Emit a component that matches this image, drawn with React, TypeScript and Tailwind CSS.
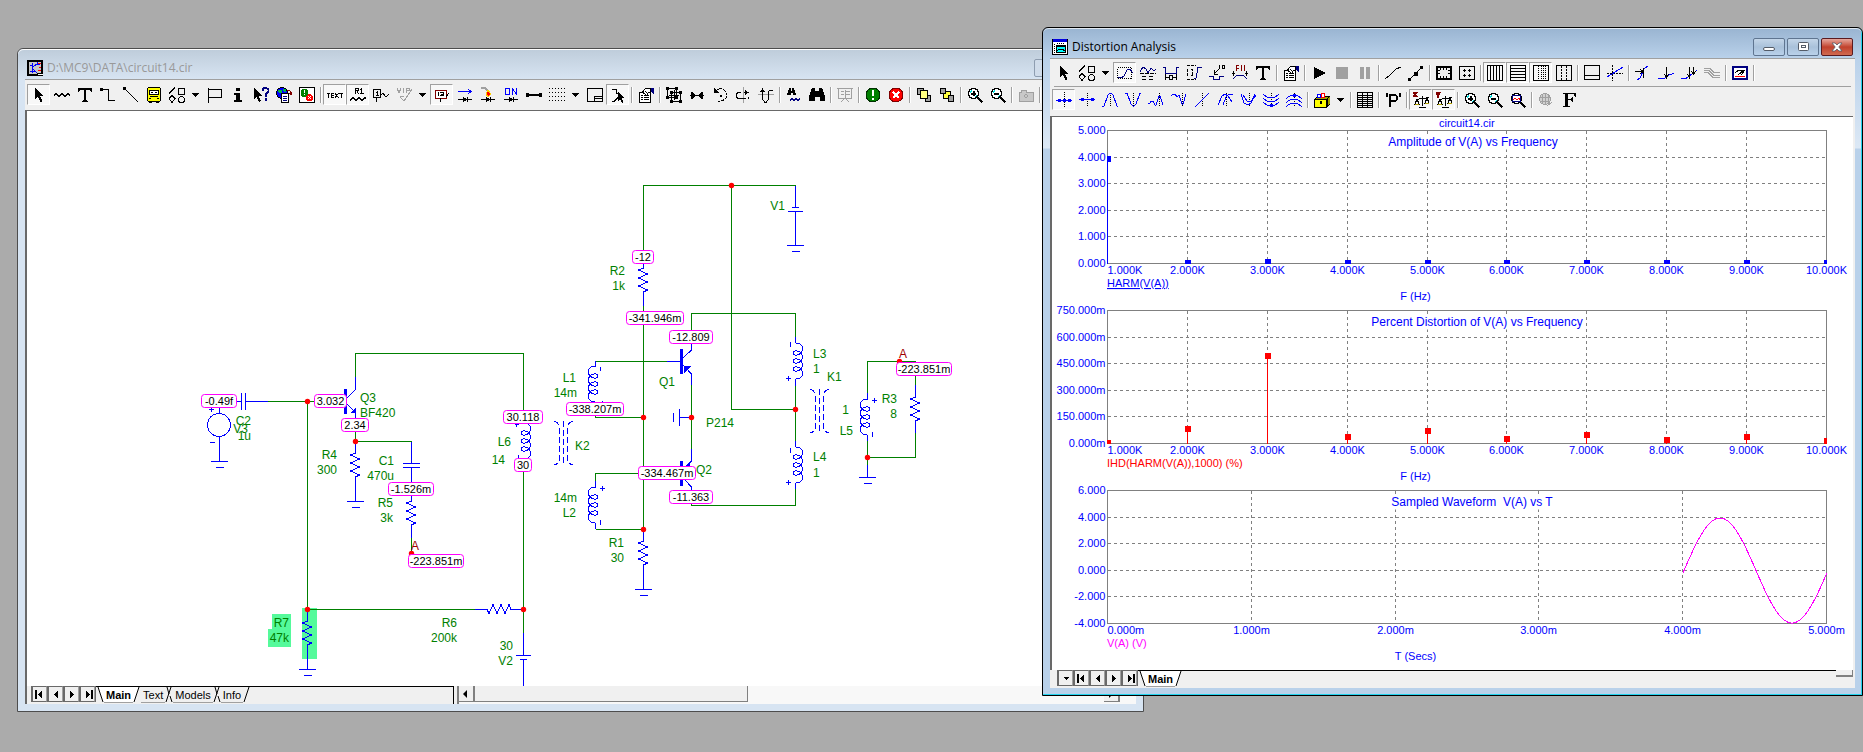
import type { ReactNode } from 'react';

const BLUE = '#0000ff';
const NAVY = '#000080';
const GREEN = '#008000';
const GRAY = '#808080';
const PINK = '#ff00ff';

/* ── Toolbar icons, all on a 16×16 grid ── */

const magnifier = (
  <>
    <circle cx="6.5" cy="6.5" r="5" stroke="#000" strokeWidth="1.5" fill="#fff" />
    <path d="M3 6l2-3M8 10l2-2" stroke="#00e0e0" />
    <path d="M10.5 10.5l5 5" strokeWidth="2.5" />
  </>
);

const properties = (
  <>
    <path d="M1.5 5.500h11v10h-11z" fill="#fff" />
    <path d="M3 8.500h2M6 8.500h5M3 10.500h2M6 10.500h5M3 12.500h2M6 12.500h5" />
    <path d="M4.500 5l3-3.500h5v4l-2 0-2 3-4-3.500z" fill="#fff" />
    <path d="M7 4l2 2" />
    <path d="M13 1h3v6h-1l-2-2z" fill={NAVY} stroke="none" />
  </>
);

const pointer = <path d="M4 1v11l3-2.500 2.500 5.500 2-1-2.500-5H13z" fill="#000" stroke="none" />;

const shapes = (
  <>
    <path d="M0 6.500L6 .500M9.500 1.500h6v6h-6zM0 11.500l3-3 3 3-3 4z" />
    <circle cx="12.500" cy="12.500" r="3" />
  </>
);

const boldT = (
  <path d="M1 1h14v4h-1l-1-2H9v10l2 1v1H5v-1l2-1V3H3L2 5H1z" fill="#000" stroke="none" />
);

const balance = (
  <>
    <path d="M9.500 4v10M6 15h7M3 7.500l13-2" />
    <path d="M4 7l-2 5h4zM14 6l-2 5h4z" stroke="#000" />
    <path d="M2 12h4M12 11h4" stroke="#b0a000" />
  </>
);

const diode = <path d="M1 12.500h14M10.500 10v5M6 10v5l3-2.500z" />;

const ICONS: Record<string, ReactNode> = {
  pointer,
  shapes,
  properties,
  text: boldT,
  wave: <path d="M0 8.500l2-2 3 3 3-3 3 3 3-3 2 2" />,
  wire: (
    <>
      <path d="M2 2.500h6.500v11H15" />
      <path d="M0 1h3v3H0z" fill="#000" stroke="none" />
    </>
  ),
  diagonal: (
    <>
      <path d="M1 1l14 14" />
      <path d="M0 0h3v3H0z" fill="#000" stroke="none" />
    </>
  ),
  bus: (
    <>
      <rect x="1.500" y=".5" width="13" height="14" rx="2" fill="#ffff00" />
      <rect x="3.500" y="3.500" width="9" height="4" fill="#fff" />
      <path d="M5 5.500h2M9 5.500h2M4 9.500h8M3 11.500h2M11 11.500h2M3 15h3M10 15h3" />
    </>
  ),
  flag: <path d="M1.500 1v15M1.500 2.500h13v8h-13" />,
  info: <path d="M6 1h4v3H6zM4 6h6v7h2v2H4v-2h2V8H4z" fill="#000" stroke="none" />,
  help: (
    <>
      <path d="M1 1v11l2.500-2L6 15l2-1-2.500-5H9z" fill="#000" stroke="none" />
      <path d="M9.500 4V2.500l2-1.500h2l2 1.500v2l-3 3v2M12.500 11v3" stroke={NAVY} strokeWidth="2" />
    </>
  ),
  web: (
    <>
      <circle cx="6" cy="6" r="5.500" fill="#0000ff" />
      <path d="M2 3h4v3H3zM7 2h3v3H8z" fill="#00b050" stroke="none" />
      <path d="M5.500 6.500h7v9h-7z" fill="#fff" />
      <path d="M7 9.500h4M7 11.500h4M7 13.500h4" stroke={NAVY} />
      <path d="M11 3q4 0 4 4M13 6l2 2 1-3" stroke="#800000" />
    </>
  ),
  errors: (
    <>
      <rect x=".5" y=".5" width="15" height="15" fill="#fff" />
      <circle cx="5.500" cy="6" r="4" fill="#008000" stroke="none" />
      <path d="M5.500 3v3M5.500 7v1" stroke="#fff" />
      <circle cx="10.500" cy="10.500" r="3.500" fill="#ff0000" stroke="none" />
      <path d="M9 9l3 3M12 9l-3 3" stroke="#fff" />
    </>
  ),
  gridText: (
    <path d="M0 6.500h3M1.500 6v5M7 6.500H4.500v4H7M5 8.500h2M8.500 6v1l2.500 3v1M11 6v1L8.500 10v1M12 6.500h4M14.500 6v5" />
  ),
  attributes: (
    <>
      <path d="M5.500 7V1.500h2.500v2H5.500M7 4l1.500 3M11.500 1v6M10 2.500h1M10 6.500h4" />
      <path d="M0 13.500l3-3 3 3 3-3 3 3 3-3 1 1" />
    </>
  ),
  nodeNumbers: <path d="M.5 2.500h7v8h-7zM4.500 4v5M3 5.500h1M3 8.500h3M3.500 11v4M8 8l2-2 3 4 3-3" />,
  vip: <path d="M1 1l2 5 2-5M7.500 1v5M10.500 6V1.500H13v2h-2M16 2l-8 12-4-4M4 9.500h4" stroke="#a0a0a0" />,
  voltages: (
    <>
      <path d="M1 3h11v8H1z" stroke="#800000" fill="#fff" />
      <path d="M4.500 5v4M6 5.500h3v3H6M7 7.500h2M6.500 11v4M12 10l3-4" />
    </>
  ),
  currents: (
    <>
      <path d="M1 4.500h13M11 2l3 2.500L11 7" stroke={BLUE} />
      {diode}
    </>
  ),
  power: (
    <>
      <path d="M1 1h4l3 3" stroke="#a0a0a0" strokeWidth="2" />
      <path d="M8 3l3 4-3 3-2-3z" fill="#ff0000" stroke="#ffd000" />
      {diode}
    </>
  ),
  conditions: (
    <>
      <path d="M2.500 1.500h4v6h-4zM9.500 8V1.500l4 6V1" stroke={BLUE} />
      {diode}
    </>
  ),
  pins: (
    <>
      <path d="M1 8h14" strokeWidth="1.500" />
      <path d="M0 6h3v4H0zM13 6h3v4h-3z" fill="#000" stroke="none" />
    </>
  ),
  grid: <path d="M0 1.500h17M0 5.500h17M0 9.500h17M0 13.500h17" strokeDasharray="1 2" />,
  corner: <path d="M.5 1.500h15v13H.5zM7.500 14.500v-5h8M8 11.500h7" />,
  rubberband: (
    <>
      <path d="M2 2.500h4v4h3M2 14.500h2l4-4" />
      <path d="M8 5v9l2-2 2 4 1.500-1-2-4h3z" fill="#000" stroke="none" />
    </>
  ),
  group: (
    <>
      <path d="M1.500 1.500h9v9h-9zM5.500 5.500h9v9h-9zM3 8.500h10M8.500 3v10" />
      <path
        d="M0 0h3v3H0zM9 0h3v3H9zM0 9h3v3H0zM9 9h3v3H9zM4 4h3v3H4zM13 4h3v3h-3zM4 13h3v3H4zM13 13h3v3h-3z"
        fill="#000"
        stroke="none"
      />
    </>
  ),
  mirror: (
    <>
      <path d="M2.500 5v7M13.500 5v7M1 8.500h14" />
      <path d="M3 5v7l4-3.500zM13 5v7L9 8.500z" fill="#000" stroke="none" />
    </>
  ),
  rotate: (
    <>
      <path d="M4 4q4-4 8-1 4 4 2 8-4 4-8 3" strokeDasharray="3 1" />
      <path d="M2 1v5h5zM8 8h2v2H8z" fill="#000" stroke="none" />
    </>
  ),
  flipX: (
    <>
      <path d="M8.500 0v16" stroke="#a0a0a0" />
      <path d="M6 5.500H3L1.500 7v3L3 11.500h8M9 5.500h4M13 12l1-2" />
      <path d="M10 3v5l4-2.500z" fill="#000" stroke="none" />
    </>
  ),
  flipY: (
    <>
      <path d="M0 7.500h16" stroke="#a0a0a0" />
      <path d="M4.500 4v8l2 3h2l2-3V5l1-2h3" />
      <path d="M2 5h5L4.500 1z" fill="#000" stroke="none" />
    </>
  ),
  findNext: (
    <>
      <path d="M3 1h2v3h1V1h2l2 7H7V6H5v2H1z" fill="#000" stroke="none" />
      <path d="M4 13.500l2-2 2 2 2-2 2 2 2-2" stroke={NAVY} />
    </>
  ),
  find: <path d="M3 1h3v3h4V1h3l3 8v5h-5v-4H6v4H0V9z" fill="#000" stroke="none" />,
  board: (
    <path
      d="M0 1.500h16M1.500 2v9h13V2M4 4.500h3M9 4.500h4M4 7.500h3M9 7.500h4M8 3v8M4 15l4-4 4 4"
      stroke="#a0a0a0"
    />
  ),
  go: (
    <>
      <circle cx="8" cy="8" r="7" fill="#008000" stroke="#003000" />
      <path d="M8 3v6M8 11v2" stroke="#fff" strokeWidth="2" />
    </>
  ),
  cancel: (
    <>
      <circle cx="8" cy="8" r="7" fill="#ff0000" stroke="#800000" />
      <path d="M5 5l6 6M11 5l-6 6" stroke="#fff" strokeWidth="2" />
    </>
  ),
  bringFront: (
    <>
      <path d="M1.500 1.500h6v6h-6zM9.500 8.500h5v6h-5z" fill="#a0a0a0" />
      <path d="M4.500 3.500h7v8h-7z" fill="#ffff80" />
    </>
  ),
  sendBack: (
    <>
      <path d="M4.500 4.500h7v7h-7z" fill="#ffff40" />
      <path d="M1.500 1.500h5v5h-5zM9.500 8.500h5v6h-5z" fill="#a0a0a0" />
    </>
  ),
  zoomIn: (
    <>
      {magnifier}
      <path d="M4 6.500h5M6.500 4v5" strokeWidth="2" />
    </>
  ),
  zoomOut: (
    <>
      {magnifier}
      <path d="M4 6.500h5" strokeWidth="2" />
    </>
  ),
  zoomFit: (
    <>
      {magnifier}
      <rect x="2.500" y="3.500" width="8" height="6" fill="#fff" stroke={NAVY} />
      <path d="M3 8l2-2 2 2 2-2 1 2" stroke="#ff0000" />
    </>
  ),
  camera: (
    <>
      <path d="M1 5h2V3h5v2h7v9H1z" fill="#c8c8c8" stroke="#a0a0a0" />
      <path d="M6 9l2-2 2 2-2 2z" stroke="#a0a0a0" />
    </>
  ),
  scaleMode: (
    <>
      <path d="M.5 2.500h14v11H.5z" strokeDasharray="1 1" />
      <path d="M1 12l3 1 3-2 3-6 3-1 3 4" stroke={NAVY} />
    </>
  ),
  cursorMode: (
    <>
      <path d="M0 7l3-5 3 2 2 4 3-5 3 3 2-2" stroke={NAVY} />
      <path d="M0 8.500h16M2 11.500h5M9 11.500h5M2 14.500h5M9 14.500h5" strokeDasharray="4 1" />
    </>
  ),
  horizTag: (
    <>
      <path d="M0 2.500h2.500v6h11v-6H16" stroke={NAVY} />
      <path d="M2.500 9v6M13.500 9v6M3 12.500h3M10 12.500h3M6.500 10.500h3v4h-3z" />
    </>
  ),
  vertTag: (
    <>
      <path d="M8 13.500h2l2-11h4" stroke={NAVY} />
      <path d="M1.500 4v7M4.500 4.500h2v6h-2M1 .500h9M1 14.500h9" strokeDasharray="3 1" />
    </>
  ),
  pointTag: (
    <>
      <path d="M0 11.500h4v3h6v-3h5" stroke={NAVY} />
      <path d="M5 9l5-5M5.500 5v4H9M10.500 0v4M13.500 .500h2v3h-2z" />
    </>
  ),
  formula: (
    <>
      <path d="M4.500 6V.500H7M5 3.500h2M10 0L9 3l1 3M12 0l1 3-1 3" stroke="#800000" />
      <path d="M1 14l4-4h6l4 4" stroke={NAVY} />
      <path d="M0 8.500h3M13 8.500h3M1.500 6v5M14.500 6v5" />
    </>
  ),
  play: <path d="M3 2v12l12-6z" fill="#000" stroke="none" />,
  stop: <path d="M2 2h12v12H2z" fill="#a0a0a0" stroke="none" />,
  pause: <path d="M3 2h4v12H3zM9 2h4v12H9z" fill="#a0a0a0" stroke="none" />,
  line: <path d="M0 14l4-3 7-7 5-2" />,
  dataPoints: (
    <>
      <path d="M1.500 14.500l12-12" />
      <path d="M0 13h3v3H0zM6 7h4v4H6zM12 1h3v3h-3z" fill="#000" stroke="none" />
    </>
  ),
  ruler: (
    <>
      <rect x="1" y="2" width="14" height="12" strokeWidth="2" />
      <path d="M4.500 3v2M7.500 3v2M10.500 3v2M4.500 11v2M7.500 11v2M10.500 11v2M2 5.500h2M2 8.500h2M12 5.500h2M12 8.500h2" />
    </>
  ),
  plusMarks: (
    <>
      <path d="M.5 1.500h15v13H.5z" />
      <path d="M4 5.500h3M9 5.500h3M4 10.500h3M9 10.500h3M5.500 4v3M10.500 4v3M5.500 9v3M10.500 9v3" />
    </>
  ),
  vertGrid: <path d="M.5 .500h15v15H.5zM3.500 1v14M6.500 1v14M9.500 1v14M12.500 1v14" />,
  horizGrid: <path d="M.5 .500h15v15H.5zM1 3.500h14M1 6.500h14M1 9.500h14M1 12.500h14" />,
  minorGrid: (
    <>
      <path d="M.5 .500h15v15H.5z" />
      <path d="M5.500 1v14M8.500 1v14M10.500 1v14M12.500 1v14" strokeDasharray="1 1" />
    </>
  ),
  minorLines: (
    <>
      <path d="M.5 .500h15v15H.5z" />
      <path d="M5.500 1v14M10.500 1v14" strokeDasharray="2 1" />
    </>
  ),
  baseline: <path d="M.5 .500h15v14H.5zM1 10.500h14" />,
  tracker: (
    <>
      <path d="M0 8.500h16M5.500 0v16" strokeDasharray="2 1" />
      <path d="M0 12L16 2" stroke={BLUE} />
    </>
  ),
  cursorX: (
    <>
      <path d="M2 15l3-2 4-9 4-3" stroke={BLUE} />
      <path d="M0 6.500h7M5 4l3 2.500L5 9M8.500 3v10" />
    </>
  ),
  cursorY: (
    <>
      <path d="M0 13.500h6l6-4 4-1" stroke={BLUE} />
      <path d="M8.500 2v12M6 9l2.500 3L11 9" />
    </>
  ),
  cursorPair: (
    <>
      <path d="M0 13.500h5l8-6 3-2" stroke={BLUE} />
      <path d="M8.500 2v12M12.500 2v8M6 9l2.500 3M10 6l2.500 3L15 6" />
    </>
  ),
  family: <path d="M0 3.500h6l4 4h6M0 5.500h5l5 5h6M0 7.500h4l5 5h7" stroke="#a0a0a0" />,
  thumb: (
    <>
      <path d="M1 2h14v12H1z" stroke={NAVY} fill="#fff" strokeWidth="2" />
      <path d="M3 12l3-1 3 1 4-1" stroke="#ff0000" />
      <path d="M3 8l4-3h5L6 10M9 10l4-5" />
    </>
  ),
  peakAll: (
    <>
      <path d="M8.500 0v16" strokeDasharray="1 1" />
      <path d="M0 8.500h16" stroke={BLUE} />
      <path d="M2 7h3v3H2zM7 7h3v3H7zM12 7h3v3h-3z" fill={BLUE} stroke="none" />
    </>
  ),
  peakNext: (
    <>
      <path d="M8.500 1v14" strokeDasharray="1 1" />
      <path d="M0 7.500h16" stroke={BLUE} />
      <path d="M2 6h3v3H2zM12 6h3v3h-3z" fill={BLUE} stroke="none" />
    </>
  ),
  peak: (
    <>
      <path d="M8.500 1v14" strokeDasharray="1 1" />
      <path d="M0 14h2L6 3l2-2h1l2 2 4 11h1" stroke={BLUE} />
    </>
  ),
  valley: (
    <>
      <path d="M8.500 1v14" strokeDasharray="1 1" />
      <path d="M0 1h2l4 11 2 2h1l2-2 4-11h1" stroke={BLUE} />
    </>
  ),
  high: (
    <>
      <path d="M11.500 1v14" strokeDasharray="1 1" />
      <path d="M0 11h2l1-2h2l2 4h1l3-9h1l3 9" stroke={BLUE} />
    </>
  ),
  low: (
    <>
      <path d="M11.500 1v14" strokeDasharray="1 1" />
      <path d="M0 4l2-2h2l2 3 2-2 3 9h1l3-10" stroke={BLUE} />
    </>
  ),
  inflection: (
    <>
      <path d="M8.500 1v14" strokeDasharray="1 1" />
      <path d="M1 15L15 1" stroke={BLUE} />
    </>
  ),
  globalHigh: (
    <>
      <path d="M9.500 1v14" strokeDasharray="1 1" />
      <path d="M1 13l4-9 3-2 3 2 4 6M6 13l3-8 3-3 4 1" stroke={BLUE} />
    </>
  ),
  globalLow: (
    <>
      <path d="M9.500 1v14" strokeDasharray="1 1" />
      <path d="M1 2l3 9 4 2 3-2 4-9M3 3l4 6 4 1 5-7" stroke={BLUE} />
    </>
  ),
  bottom: (
    <>
      <path d="M8.500 1v14" strokeDasharray="1 1" />
      <path d="M0 2q8 8 16 0M0 6q8 8 16 0M0 10q8 8 16 0" stroke={BLUE} />
      <path d="M7 12h3v3H7z" fill={BLUE} stroke="none" />
    </>
  ),
  top: (
    <>
      <path d="M8.500 1v14" strokeDasharray="1 1" />
      <path d="M0 7q8-8 16 0M0 11q8-8 16 0M0 15q8-8 16 0" stroke={BLUE} />
      <path d="M7 2h3v3H7z" fill={BLUE} stroke="none" />
    </>
  ),
  chest: (
    <>
      <path d="M1 7l3-3h12l-3 3zM13 7l3-3v8l-3 3z" fill="#a0a000" />
      <path d="M.5 7.500h12v8H.5z" fill="#ffff00" />
      <path d="M3 5V2h3v3z" fill="#fff" stroke={BLUE} />
      <path d="M7 1h3v4H7z" fill="#fff" stroke="#ff0000" />
      <path d="M6 9h2v3H6z" fill="#000" stroke="none" />
    </>
  ),
  table: (
    <path d="M.5 .500h15v15H.5zM1 3.500h14M1 5.500h14M1 7.500h14M1 9.500h14M1 11.500h14M1 13.500h14M5.500 1v14M10.500 1v14" />
  ),
  performance: (
    <path d="M1.500 1v4M15 1v4M5 15V3h5.500l1.500 1.500v3L10.500 9H5" strokeWidth="2" />
  ),
  xScale: (
    <>
      {balance}
      <path d="M0 0l4 5M4 0L0 5" stroke="#800000" strokeWidth="2" />
    </>
  ),
  yScale: (
    <>
      {balance}
      <path d="M0 0l2 3 2-3M2 3v3" stroke="#800000" strokeWidth="2" />
    </>
  ),
  globe: (
    <>
      <circle cx="7" cy="7" r="5.500" fill="#d0d0d0" stroke="#a0a0a0" />
      <path d="M2 5.500h10M2 9.500h10M7.500 2v11M4.500 3v9M10.500 3v9M9 14l5-4" stroke="#a0a0a0" />
    </>
  ),
  font: (
    <path d="M2 1h13v4h-1l-1-3H7v5h3l1-2h1v5h-1l-1-2H7v6l2 0v1H2v-1h2V2H2z" fill="#000" stroke="none" />
  ),
};

// '|' is a separator, 'v' a drop-down arrow, a leading '*' a pressed button
const CIRCUIT_TOOLS =
  '*pointer wave text wire diagonal bus shapes v flag info help web errors | *gridText *attributes nodeNumbers vip v *voltages currents power conditions pins grid v corner *rubberband | properties | group mirror rotate flipX flipY | findNext find | board | go cancel | bringFront sendBack | zoomIn zoomOut | camera |';
const SCOPE_TOOLS =
  'pointer shapes v *scaleMode cursorMode horizTag vertTag pointTag formula text | properties | play stop pause | line dataPoints | ruler plusMarks | *vertGrid *horizGrid *minorGrid minorLines | baseline tracker | cursorX cursorY cursorPair family | thumb |';
const CURSOR_TOOLS =
  '*peakAll peakNext peak valley high low inflection globalHigh globalLow bottom top | chest v | table | performance | *xScale *yScale | zoomIn zoomOut zoomFit | globe font';

function Toolbar({ tools, label }: { tools: string; label: string }) {
  return (
    <div role="toolbar" aria-label={label} className="flex h-[21px] shrink-0 items-center">
      {tools.split(' ').map((tool, i) => {
        if (tool === '|') {
          return (
            <div key={i} className="flex w-[5px] shrink-0 justify-center">
              <div className="h-4 w-[2px] border-r border-l border-r-white border-l-[#a0a0a0]" />
            </div>
          );
        }
        if (tool === 'v') {
          return (
            <button key={i} aria-label="More" className="flex w-[15px] shrink-0 justify-center">
              <svg width="7" height="4" shapeRendering="crispEdges">
                <path d="M0 0h7L3.500 4z" />
              </svg>
            </button>
          );
        }
        const pressed = tool.startsWith('*');
        const name = pressed ? tool.slice(1) : tool;
        return (
          <button
            key={i}
            aria-label={name}
            aria-pressed={pressed}
            className={`flex h-[21px] w-[23px] shrink-0 items-center justify-center border ${
              pressed
                ? 'border-t-[#a0a0a0] border-r-white border-b-white border-l-[#a0a0a0] bg-[#f8f8f8]'
                : 'border-transparent'
            }`}
          >
            <svg width="16" height="16" fill="none" stroke="#000" shapeRendering="crispEdges">
              {ICONS[name]}
            </svg>
          </button>
        );
      })}
    </div>
  );
}

/* ── Window chrome ── */

function CaptionButtons({ active }: { active: boolean }) {
  const plain = active
    ? 'border-[#5f7590] bg-linear-to-b from-[#c3d5e8] via-[#a9c1da] to-[#b9d1ea]'
    : 'border-[#8e9db0] bg-[#d0dcea]';
  const close = active ? 'border-[#5a1a20] bg-linear-to-b from-[#e5a79e] via-[#c1402c] to-[#cf6a50]' : plain;
  return (
    <div className="flex gap-[2px]">
      <button aria-label="Minimize" className={`flex h-[18px] w-8 items-center justify-center rounded-xs border ${plain}`}>
        <span className="mt-1 h-1 w-3 rounded-xs border border-[#545c68] bg-white" />
      </button>
      <button aria-label="Restore" className={`flex h-[18px] w-8 items-center justify-center rounded-xs border ${plain}`}>
        <svg width="11" height="9" fill="#fff" stroke="#545c68">
          <rect x=".5" y=".5" width="10" height="8" rx="1" />
          <rect x="3.500" y="3.500" width="4" height="2" />
        </svg>
      </button>
      <button aria-label="Close" className={`flex h-[18px] w-8 items-center justify-center rounded-xs border ${close}`}>
        <svg width="12" height="10" fill="#fff" stroke="#545c68" strokeWidth=".8">
          <path d="M1 1h3l2 2 2-2h3L7.800 5 11 9H8L6 7 4 9H1l3.200-4z" />
        </svg>
      </button>
    </div>
  );
}

const NAV = {
  list: 'M4 6h6L7 9z',
  first: 'M2 3h2v9H2zM9 3v9L5 7.500z',
  prev: 'M9 3v9L5 7.500z',
  next: 'M5 3v9l4-4.500z',
  last: 'M5 3v9l4-4.500zM10 3h2v9h-2z',
};

function NavButtons({ names }: { names: (keyof typeof NAV)[] }) {
  return (
    <div className="flex h-4 shrink-0 border-r border-[#696969]">
      {names.map((name) => (
        <button
          key={name}
          aria-label={name}
          className="h-4 w-4 border-t border-r border-b border-l-2 border-t-[#696969] border-r-[#a0a0a0] border-b-[#696969] border-l-[#696969] bg-[#f0f0f0]"
        >
          <svg width="13" height="14" shapeRendering="crispEdges">
            <path d={NAV[name]} />
          </svg>
        </button>
      ))}
    </div>
  );
}

// Slanted edge between two page tabs; white where it belongs to the open page
function TabEdge({ left, right }: { left?: 'open' | 'shut'; right?: 'open' | 'shut' }) {
  return (
    <svg width="8" height="16" className="shrink-0">
      {left === 'open' && <path d="M0 0h6L1 15H0z" fill="#fff" />}
      {right === 'open' && <path d="M2 0h6v15H7z" fill="#fff" />}
      {left && <path d="M6 0L1 15" stroke="#000" />}
      {right && <path d={left ? 'M2 0l2 7M5 9l2 6' : 'M2 0l5 15'} stroke="#000" />}
    </svg>
  );
}

function PageTab({ name, open }: { name: string; open?: boolean }) {
  return (
    <button
      role="tab"
      aria-selected={!!open}
      className={`h-4 border-b border-[#a0a0a0] px-[2px] text-[11px] leading-[14px] ${open ? 'bg-white font-bold' : ''}`}
    >
      {name}
    </button>
  );
}

/* ── Schematic parts, in desktop pixels ── */

function Resistor({ x, y, flat }: { x: number; y: number; flat?: boolean }) {
  const d = flat
    ? `M${x} ${y}l2 4 4-9 4 9 4-9 4 9 4-9 2 5`
    : `M${x} ${y}l-5 2 9 4-9 4 9 4-9 4 9 4-4 2`;
  return <path d={d} stroke={BLUE} fill="none" />;
}

function Ground({ x, y }: { x: number; y: number }) {
  return <path d={`M${x - 8.5} ${y}h17M${x - 4} ${y + 6}h8`} stroke={BLUE} />;
}

function Coil({ x, y, flip }: { x: number; y: number; flip?: boolean }) {
  let d = 'M0 0C-5 0-7 3-7 6';
  for (let i = 0; i < 3; i++) {
    const t = 6 + i * 8;
    d += `C-7 ${t + 6} 2 ${t + 8} 2 ${t + 4}C2 ${t} -7 ${t + 2} -7 ${t + 8}`;
  }
  d += 'C-7 33-5 36 0 36';
  return <path d={d} stroke={BLUE} fill="none" transform={`translate(${x} ${y}) scale(${flip ? -1 : 1} 1)`} />;
}

function Core({ x, y }: { x: number; y: number }) {
  return (
    <path
      d={`M${x - 9} ${y}q5 2 5 7v30q0 5-5 7M${x} ${y}v44M${x + 9} ${y}q-5 2-5 7v30q0 5 5 7`}
      stroke={BLUE}
      fill="none"
      strokeDasharray="6 3"
    />
  );
}

const WIRES = [
  'M355.5 377V353.500H523.500V412',
  'M268 401.500H315',
  'M307.500 401V612',
  'M355.500 432V441.500H411.500',
  'M411.500 538V553',
  'M523.500 471V633',
  'M307.500 609.500H475',
  'M643.500 251V185.500H795.500',
  'M643.500 306V530',
  'M731.500 185.500V409.500H795.500',
  'M691.500 331V313.500H795.500V337',
  'M667 361.500H595.500',
  'M595.500 415V417.500H643.500',
  'M640 473.500H595.500V481',
  'M595.500 529.500H643.500',
  'M691.500 385V449',
  'M691.500 503V505.500H795.500V489',
  'M795.500 386V441',
  'M867.500 393V361.500H915.500V385',
  'M867.500 441V465M867.500 457.500H915.500V433',
];

const LEADS = [
  'M355.500 377V389.500L347 398M347 404L355.500 412.500V418',
  'M241.500 393V410M245.500 393V410M246 401.500H268M237 401.500H241',
  'M219.500 408V414M219.500 437V461.500M209 409.500H214M211.500 407V412M210 442.500H215',
  'M355.500 442V453M355.500 477V501.500',
  'M411.500 442V463.500M403 463.500H420M403 467.500H420M411.500 468V482',
  'M411.500 496V501M411.500 525V538',
  'M475 609.500H487M511 609.500H523',
  'M523.500 633V655.500M516 655.500H531M520 659.500H527M523.500 660V690',
  'M307.500 612V621M307.500 645V669.500',
  'M595.500 361V366M600.500 367V371M602.500 401V403',
  'M595.500 481V487M595.500 523V529M600 488.500H605M602.500 486V491M600.500 520V525',
  'M643.500 531V541M643.500 565V589.500',
  'M667 361.500H681M691.500 343V350L683 358M683 365L691.500 374V385',
  'M691.500 417.500H679.500M679.500 409V426M673.500 413V422',
  'M691.500 449V461L683 469M683 478L691.500 487V491',
  'M795.500 186V207.500M792 207.500H799M788 211.500H803M795.500 211V245.500',
  'M643.500 264V268M643.500 292V306',
  'M795.500 337V343M795.500 379V386M790.500 342V347M786 378.500H791M788.500 376V381',
  'M795.500 441V447M795.500 483V489M790.500 448V453M786 482.500H791M788.500 480V485',
  'M867.500 393V399M867.500 435V441M867.500 465V477.500M872 400.500H877M874.500 398V403M872.500 432V437',
  'M915.500 385V397M915.500 421V433',
  'M515 424.500H519M516.500 424V427M518.500 455V458',
];

const DOTS = [
  [307.5, 401.5], [355.5, 441.5], [411.5, 553.5], [307.5, 609.5], [523.5, 609.5], [643.5, 417.5], [643.5, 529.5],
  [691.5, 417.5], [731.5, 185.5], [795.5, 409.5], [867.5, 457.5], [899.5, 361.5],
];

const LABELS: [string, number, number, ('end' | 'start')?][] = [
  ['C2', 251, 425], ['V3', 248, 433], ['1u', 251, 440],
  ['Q3', 360, 402, 'start'], ['BF420', 360, 417, 'start'],
  ['R4', 337, 459], ['300', 337, 474],
  ['C1', 394, 465], ['470u', 394, 480],
  ['R5', 393, 507], ['3k', 393, 522],
  ['L6', 511, 446], ['14', 505, 464],
  ['R7', 289, 627], ['47k', 289, 642],
  ['R6', 457, 627], ['200k', 457, 642],
  ['30', 513, 650], ['V2', 513, 665],
  ['L1', 576, 382], ['14m', 577, 397], ['K2', 575, 450, 'start'],
  ['14m', 577, 502], ['L2', 576, 517],
  ['R1', 624, 547], ['30', 624, 562],
  ['Q1', 659, 386, 'start'], ['P214', 706, 427, 'start'], ['Q2', 696, 474, 'start'],
  ['V1', 785, 210], ['R2', 625, 275], ['1k', 625, 290],
  ['L3', 813, 358, 'start'], ['1', 813, 373, 'start'], ['K1', 827, 381, 'start'],
  ['1', 849, 414], ['L5', 853, 435], ['R3', 897, 403], ['8', 897, 418],
  ['L4', 813, 461, 'start'], ['1', 813, 477, 'start'],
];

const READINGS: [string, number, number, number][] = [
  ['-0.49f', 201, 394, 36],
  ['3.032', 314, 394, 33],
  ['2.34', 341, 418, 28],
  ['-1.526m', 388, 482, 46],
  ['-223.851m', 408, 554, 56],
  ['30.118', 503, 410, 40],
  ['30', 514, 458, 18],
  ['-338.207m', 566, 402, 58],
  ['-12', 632, 250, 22],
  ['-341.946m', 626, 311, 58],
  ['-12.809', 669, 330, 44],
  ['-334.467m', 638, 466, 58],
  ['-11.363', 669, 490, 44],
  ['-223.851m', 896, 362, 56],
];

function Schematic() {
  return (
    <svg width="1108" height="575" viewBox="27 111 1108 575" className="block" role="img" aria-label="circuit14.cir schematic">
      <path d="M302 608h15v51h-15zM272 614h19v33h-23v-18h4z" fill="#55fa9b" />
      <g shapeRendering="crispEdges">
        <path d={WIRES.join('')} stroke={GREEN} fill="none" />
        <path d={LEADS.join('')} stroke={BLUE} fill="none" />
        <path d="M344 389h3v25h-3zM680 349h3v25h-3zM680 461h3v25h-3z" fill={BLUE} />
        <path d="M356 413h-6l6-6zM684 366h7l-7 7zM684 468l6-6v6z" fill={BLUE} />
        <Ground x={219.5} y={461.5} />
        <Ground x={355.5} y={501.5} />
        <Ground x={307.5} y={669.5} />
        <Ground x={643.5} y={589.5} />
        <Ground x={795.5} y={245.5} />
        <Ground x={867.5} y={477.5} />
        <Resistor x={355.5} y={453} />
        <Resistor x={411.5} y={501} />
        <Resistor x={307.5} y={621} />
        <Resistor x={643.5} y={541} />
        <Resistor x={643.5} y={268} />
        <Resistor x={915.5} y={397} />
        <Resistor x={487} y={609.5} flat />
        <Coil x={595.5} y={366} />
        <Coil x={595.5} y={487} />
        <Coil x={867.5} y={399} />
        <Coil x={523.5} y={423} flip />
        <Coil x={795.5} y={343} flip />
        <Coil x={795.5} y={447} flip />
        <Core x={563.5} y={421} />
        <Core x={819.5} y={389} />
        <circle cx="219" cy="425" r="11.500" stroke={BLUE} fill="none" />
      </g>
      {DOTS.map(([x, y], i) => (
        <circle key={i} cx={x} cy={y} r="2.700" fill="#ff0000" />
      ))}
      <g fontSize="12" fill={GREEN}>
        {LABELS.map(([text, x, y, anchor], i) => (
          <text key={i} x={x} y={y} textAnchor={anchor ?? 'end'}>
            {text}
          </text>
        ))}
      </g>
      <g fontSize="12" fill="#a00000">
        <text x="411" y="550">A</text>
        <text x="899" y="358">A</text>
      </g>
      <g fontSize="11">
        {READINGS.map(([text, x, y, w], i) => (
          <g key={i}>
            <rect x={x + 0.5} y={y + 0.5} width={w - 1} height="13" rx="3" fill="#fff" stroke={PINK} />
            <text x={x + w / 2} y={y + 11} textAnchor="middle">
              {text}
            </text>
          </g>
        ))}
      </g>
    </svg>
  );
}

/* ── Plots ── */

const LEFT = 1107.5;
const WIDTH = 719;
const HEIGHT = 133;

interface PlotProps {
  top: number;
  title: string;
  titleX: number;
  titleWidth: number;
  yLabels: string[];
  xLabels: string[];
  trace: string;
  color: string;
  axis: string;
  underline?: boolean;
  children: ReactNode;
}

function Plot({ top, title, titleX, titleWidth, yLabels, xLabels, trace, color, axis, underline, children }: PlotProps) {
  const bottom = top + HEIGHT;
  const xs = xLabels.map((_, i) => Math.round((i * WIDTH) / (xLabels.length - 1)) + LEFT);
  const ys = yLabels.map((_, i) => Math.round((i * HEIGHT) / (yLabels.length - 1)) + top);
  return (
    <g fill={BLUE}>
      <g stroke={GRAY} fill="none" shapeRendering="crispEdges">
        {xs.slice(1, -1).map((x) => (
          <path key={x} d={`M${x} ${top}V${bottom}`} strokeDasharray="3 3" />
        ))}
        {ys.slice(1, -1).map((y) => (
          <path key={y} d={`M${LEFT} ${y}h${WIDTH}`} strokeDasharray="3 3" />
        ))}
        <rect x={LEFT} y={top} width={WIDTH} height={HEIGHT} />
      </g>
      {children}
      <rect x={titleX - titleWidth / 2} y={top + 5} width={titleWidth} height="14" fill="#fff" />
      <text x={titleX} y={top + 15.5} fontSize="12" textAnchor="middle" className="whitespace-pre">
        {title}
      </text>
      {yLabels.map((label, i) => (
        <text key={label} x={LEFT - 2} y={ys[i] + 3.5} textAnchor="end">
          {label}
        </text>
      ))}
      {xLabels.map((label, i) => (
        <text key={label} x={i === 0 ? LEFT : xs[i]} y={bottom + 10.5} textAnchor={i === 0 ? 'start' : 'middle'}>
          {label}
        </text>
      ))}
      <text x={LEFT - 0.5} y={bottom + 23.5} fill={color} textDecoration={underline ? 'underline' : undefined}>
        {trace}
      </text>
      <text x={LEFT + 308} y={bottom + 36.5} textAnchor="middle">
        {axis}
      </text>
    </g>
  );
}

const FREQS = ['1.000K', '2.000K', '3.000K', '4.000K', '5.000K', '6.000K', '7.000K', '8.000K', '9.000K', '10.000K'];
const AMPLITUDE = [159, 263, 262, 263, 263, 263, 263, 263, 263, 263];
const DISTORTION = [443, 429, 356, 437, 431, 439, 435, 440, 437, 441];

function Stems({ values, base, color }: { values: number[]; base: number; color: string }) {
  return (
    <g fill={color} stroke={color} shapeRendering="crispEdges">
      {values.map((y, i) => {
        const x = Math.round((i * WIDTH) / 9) + LEFT;
        const x0 = Math.max(x - 2.5, LEFT - 0.5);
        const x1 = Math.min(x + 3.5, LEFT + WIDTH + 0.5);
        return (
          <g key={i}>
            <path d={`M${x} ${y}V${base}`} />
            <path d={`M${x0} ${y - 3}H${x1}V${Math.min(y + 3, base)}H${x0}z`} stroke="none" />
          </g>
        );
      })}
    </g>
  );
}

function sinePath() {
  let d = '';
  for (let x = 0; x <= 144; x++) {
    const y = 570.5 - 52.5 * Math.sin((2 * Math.PI * (x - 1)) / 144);
    d += `${x === 0 ? 'M' : 'L'}${1683 + x} ${y.toFixed(1)}`;
  }
  return d;
}

function Plots() {
  return (
    <svg width="801" height="552" viewBox="1052 117 801 552" fontSize="11" className="block" role="img" aria-label="Distortion plots">
      <text x="1439" y="127" fill={BLUE}>
        circuit14.cir
      </text>
      <Plot
        top={130.5}
        title="Amplitude of V(A) vs Frequency"
        titleX={1473}
        titleWidth={172}
        yLabels={['5.000', '4.000', '3.000', '2.000', '1.000', '0.000']}
        xLabels={FREQS}
        trace="HARM(V(A))"
        color={BLUE}
        axis="F (Hz)"
        underline
      >
        <Stems values={AMPLITUDE} base={264} color={BLUE} />
      </Plot>
      <Plot
        top={310.5}
        title="Percent Distortion of V(A) vs Frequency"
        titleX={1477}
        titleWidth={216}
        yLabels={['750.000m', '600.000m', '450.000m', '300.000m', '150.000m', '0.000m']}
        xLabels={FREQS}
        trace="IHD(HARM(V(A)),1000) (%)"
        color="#ff0000"
        axis="F (Hz)"
      >
        <Stems values={DISTORTION} base={444} color="#ff0000" />
      </Plot>
      <Plot
        top={490.5}
        title="Sampled Waveform  V(A) vs T"
        titleX={1472}
        titleWidth={164}
        yLabels={['6.000', '4.000', '2.000', '0.000', '-2.000', '-4.000']}
        xLabels={['0.000m', '1.000m', '2.000m', '3.000m', '4.000m', '5.000m']}
        trace="V(A) (V)"
        color={PINK}
        axis="T (Secs)"
      >
        <path d={sinePath()} stroke={PINK} fill="none" shapeRendering="crispEdges" />
      </Plot>
    </svg>
  );
}

/* ── Windows ── */

function CircuitWindow() {
  return (
    <section
      aria-label="circuit14.cir"
      className="absolute top-[48px] left-[17px] flex h-[664px] w-[1127px] flex-col rounded-t-md border border-[#4d4d4d] bg-[#d7e4f2] px-[7px] pb-[7px]"
    >
      <header className="-mx-[7px] flex h-[30px] shrink-0 items-center gap-1 rounded-t-md border-t border-white bg-linear-to-b from-[#bfcddb] to-[#d7e4f2] px-[9px] pt-[6px]">
        <svg width="16" height="16" shapeRendering="crispEdges" fill="none">
          <path d="M1 1h14v14H1z" fill="#c8c8c8" stroke="#000" strokeWidth="2" />
          <path d="M3 5.500h3M5.500 3v10M6 7l4-3V2M6 9l4 4M10 4.500h3M8 11.500H3" stroke={BLUE} />
          <path d="M11 3.500h3M12 7.500h2M11 10.500h3" stroke="#ff0000" />
          <path d="M10 13h6v2h-6z" fill="#fff" stroke="#000" />
        </svg>
        <h1 className="flex-1 font-['Open_Sans',sans-serif] text-[12px] text-[#999]">D:\MC9\DATA\circuit14.cir</h1>
        <CaptionButtons active={false} />
      </header>
      <div className="flex min-h-0 flex-1 flex-col border-t border-[#a0a0a0] bg-[#f0f0f0]">
        <div className="h-[30px] shrink-0 overflow-hidden pt-1 pl-[2px]">
          <Toolbar tools={CIRCUIT_TOOLS} label="Schematic" />
        </div>
        <div className="min-h-0 flex-1 overflow-hidden border-t border-l-2 border-[#696969] bg-white">
          <Schematic />
        </div>
        <div className="flex h-[18px] shrink-0 border-l-2 border-[#696969] pl-1">
          <NavButtons names={['first', 'prev', 'next', 'last']} />
          <div role="tablist" className="flex w-[358px] border-t border-r border-black">
            <TabEdge right="open" />
            <PageTab name="Main" open />
            <TabEdge left="open" />
            <PageTab name="Text" />
            <TabEdge left="shut" right="shut" />
            <PageTab name="Models" />
            <TabEdge left="shut" right="shut" />
            <PageTab name="Info" />
            <TabEdge left="shut" />
          </div>
          <div className="ml-[3px] flex min-w-0 flex-1 border-l-2 border-[#808080] bg-[#f8f8f8] pr-4">
            <button aria-label="Scroll left" className="h-4 w-4 border-r-2 border-b border-[#808080] bg-[#f0f0f0]">
              <svg width="14" height="15">
                <path d="M8 4v8L4 8z" />
              </svg>
            </button>
            <div className="h-4 w-[273px] border-r border-b border-[#808080] bg-[#f0f0f0]" />
            <div className="flex-1" />
            <button aria-label="Scroll right" className="h-4 w-4 border-r-2 border-b border-[#808080] bg-[#f0f0f0]">
              <svg width="14" height="15">
                <path d="M5 4v8l4-4z" />
              </svg>
            </button>
          </div>
        </div>
      </div>
    </section>
  );
}

function AnalysisWindow() {
  return (
    <section
      aria-label="Distortion Analysis"
      className="absolute top-[27px] right-0 left-[1042px] flex h-[669px] flex-col rounded-t-md border border-black bg-[linear-gradient(#99b4d1_0px,#b9d1ea_30px,#dce8f5_120px,#b9d1ea_121px)] px-[7px] pb-[7px] shadow-[inset_-1px_-1px_0_#22d3ee]"
    >
      <header className="-mx-[7px] flex h-[30px] shrink-0 items-center gap-1 rounded-t-md border-t border-white/70 px-[9px] pt-[6px]">
        <svg width="16" height="16" shapeRendering="crispEdges">
          <path d="M0 0h16v16H0z" />
          <path d="M1 3h14v12H1z" fill="#fff" />
          <path d="M1 0h14v3H1z" fill="#0000e0" />
          <path d="M4 6h10v8H4z" />
          <path d="M5 8h8v5H5z" fill="#00ffff" />
          <path d="M5 12l2-2h3l3 2" fill="none" stroke="#000" />
          <path d="M2.500 5v9M5 4.500h8" stroke="#000" strokeDasharray="1 1" />
        </svg>
        <h1 className="flex-1 font-['Open_Sans',sans-serif] text-[12px] text-black">Distortion Analysis</h1>
        <CaptionButtons active />
      </header>
      <div className="flex min-h-0 flex-1 flex-col border-t border-[#a0a0a0] bg-[#f0f0f0]">
        <div className="flex h-[27px] shrink-0 overflow-hidden pt-[3px] pl-[2px]">
          <Toolbar tools={SCOPE_TOOLS} label="Scope" />
        </div>
        <div className="mx-1 h-px shrink-0 bg-[#a0a0a0]" />
        <div className="flex h-[29px] shrink-0 overflow-hidden pt-[2px] pl-[2px]">
          <Toolbar tools={CURSOR_TOOLS} label="Cursor" />
        </div>
        <div className="mr-[2px] min-h-0 flex-1 overflow-hidden border-t border-l-2 border-[#696969] bg-white">
          <Plots />
        </div>
        <div className="flex h-[18px] shrink-0 pl-[7px]">
          <NavButtons names={['list', 'first', 'prev', 'next', 'last']} />
          <div role="tablist" className="flex flex-1 border-t border-black">
            <TabEdge right="open" />
            <PageTab name="Main" open />
            <TabEdge left="open" />
          </div>
          <div className="mr-[2px] h-[7px] w-[17px] border-r border-b-2 border-[#808080]" />
        </div>
      </div>
    </section>
  );
}

export default function App() {
  return (
    <main className="relative min-h-screen overflow-hidden bg-[#ababab] font-['Liberation_Sans',Arial,sans-serif] text-black">
      <CircuitWindow />
      <AnalysisWindow />
    </main>
  );
}
